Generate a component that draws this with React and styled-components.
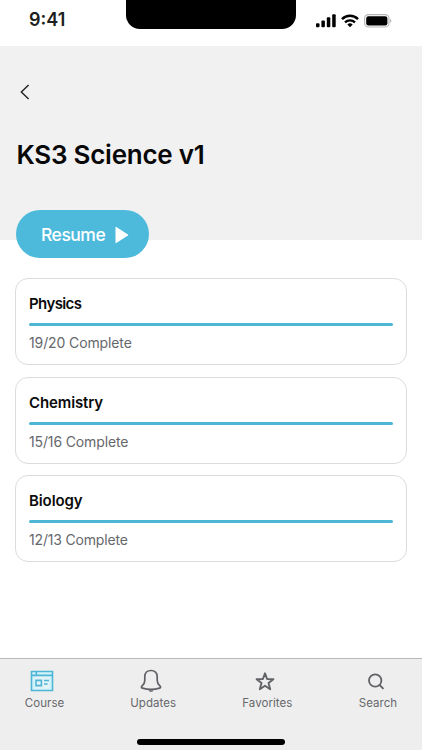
import React from "react"
import styled, { createGlobalStyle } from "styled-components"

const units = [
  { name: "Physics", done: 19, total: 20, heading: -0.6, track: -0.12 },
  { name: "Chemistry", done: 15, total: 16, heading: -0.12, track: -0.14 },
  { name: "Biology", done: 12, total: 13, heading: -0.1, track: -0.18 },
]

const CourseIcon = () => (
  <svg width="24" height="24" viewBox="0 0 24 24" fill="none" stroke="currentColor">
    <path d="M1.500 2.500h21v19h-21z" fill="#d3f3fb" strokeWidth="1.600" />
    <path d="M5 7.500h14v12H5z" fill="#e4f3f7" stroke="none" />
    <path d="M1.500 6.400h21M6.300 2.500v3.900" strokeWidth="1.600" />
    <path d="M6 11.400h5.400v5.200H6z" strokeWidth="1.600" />
    <path d="M14 11.600h5M14 15.100h3.600" strokeWidth="1.500" />
  </svg>
)

const BellIcon = () => (
  <svg width="24" height="24" viewBox="0 0 24 24" fill="none" stroke="currentColor">
    <path
      d="M12 1.500c-3.800 0-6.200 2.500-6.200 6.100v4c0 2.500-.8 3.600-2.700 5.300-1 1-.8 1.900.4 2.200 5 1.500 12 1.500 17 0 1.200-.3 1.400-1.200.4-2.200-1.900-1.700-2.700-2.800-2.700-5.300v-4c0-3.600-2.400-6.100-6.200-6.100z"
      strokeWidth="1.700"
      strokeLinejoin="round"
    />
    <path d="M9.500 21.300h5c-.5 1-1.300 1.500-2.500 1.500s-2-.5-2.500-1.500z" fill="currentColor" stroke="none" />
  </svg>
)

const StarIcon = () => (
  <svg width="24" height="24" viewBox="0 0 24 24" fill="none" stroke="currentColor">
    <path
      d="M12 4.300l2.100 5.700 6.300.2-4.900 3.900 1.700 6.200-5.200-3.500-5.200 3.500 1.700-6.200-4.900-3.900 6.300-.2z"
      strokeWidth="1.900"
      strokeLinejoin="round"
    />
  </svg>
)

const SearchIcon = () => (
  <svg width="24" height="24" viewBox="0 0 24 24" fill="none" stroke="currentColor" strokeWidth="1.800">
    <circle cx="11.200" cy="11.500" r="6.200" />
    <path d="M15.600 16l3.400 3.400" strokeLinecap="round" />
  </svg>
)

const tabs = [
  { label: "Course", icon: <CourseIcon />, active: true, width: 39, shift: 5 },
  { label: "Updates", icon: <BellIcon />, width: 45, shift: 5 },
  { label: "Favorites", icon: <StarIcon />, width: 50, shift: 4 },
  { label: "Search", icon: <SearchIcon />, width: 38, shift: 3 },
]

const App = () => {
  return (
    <Screen>
      <GlobalStyle />
      <StatusBar>
        <Time>9:41</Time>
        <Notch />
        <StatusIcons>
          <svg width="20" height="14" viewBox="0 0 20 14">
            <rect x="0" y="9.200" width="3.500" height="4" rx="1" />
            <rect x="5.400" y="6.500" width="3.500" height="6.700" rx="1" />
            <rect x="10.800" y="3.300" width="3.500" height="9.900" rx="1" />
            <rect x="16.200" y="0.300" width="3.500" height="12.900" rx="1" />
          </svg>
          <svg width="18" height="14" viewBox="0 0 18 14" fill="none" stroke="#000">
            <path d="M1 5.100a11.500 11.500 0 0 1 16 0" strokeWidth="2.500" />
            <path d="M4 8.300a7.200 7.200 0 0 1 10 0" strokeWidth="2.300" />
            <path d="M9 13.200l-2.700-2.700a3.900 3.900 0 0 1 5.400 0z" fill="#000" stroke="none" />
          </svg>
          <svg width="28" height="14" viewBox="0 0 28 14">
            <rect x="0.600" y="0.600" width="24.400" height="12.400" rx="3.800" fill="none" stroke="#b4b4b4" strokeWidth="1.100" />
            <rect x="2.200" y="2.200" width="21.200" height="9.200" rx="2.200" />
            <path d="M26.200 4.800c1.500.7 1.500 3.300 0 4z" fill="#aaa" />
          </svg>
        </StatusIcons>
      </StatusBar>
      <Hero>
        <BackButton aria-label="Back">
          <svg width="10" height="16" viewBox="0 0 10 16" fill="none" stroke="#222" strokeWidth="1.400">
            <path d="M8.600 0.900L1.300 8l7.300 7.100" />
          </svg>
        </BackButton>
        <Title>KS3 Science v1</Title>
      </Hero>
      <ResumeButton>
        <span>Resume</span>
        <svg width="14" height="18" viewBox="0 0 14 18" fill="#fff">
          <path d="M0.500 1.400v15.200c0 .5.400.7.800.4l11.700-7.500c.4-.3.400-.7 0-1l-11.700-7.500c-.4-.3-.8-.1-.8.400z" />
        </svg>
      </ResumeButton>
      <UnitList>
        {units.map(({ name, done, total, heading, track }) => (
          <Card key={name}>
            <UnitName $track={heading}>{name}</UnitName>
            <Progress />
            <Count $track={track}>
              {done}/{total} Complete
            </Count>
          </Card>
        ))}
      </UnitList>
      <TabBar>
        <TabList>
          {tabs.map(({ label, icon, active, width, shift }) => (
            <Tab key={label} $active={active} $width={width} $shift={shift}>
              {icon}
              <span>{label}</span>
            </Tab>
          ))}
        </TabList>
        <HomeIndicator />
      </TabBar>
    </Screen>
  )
}

const GlobalStyle = createGlobalStyle`
  * {
    box-sizing: border-box;
  }
  body {
    margin: 0;
    background: #fff;
    font-family: Inter, "Liberation Sans", sans-serif;
  }
  h1, h2, p {
    margin: 0;
  }
  svg {
    display: block;
    flex-shrink: 0;
  }
  button {
    border: none;
    padding: 0;
    background: transparent;
    font-family: inherit;
    cursor: pointer;
  }
`

const Screen = styled.main`
  display: flex;
  flex-direction: column;
  width: 422px;
  height: 750px;
  overflow: hidden;
  background: #fff;
`

const StatusBar = styled.header`
  display: grid;
  grid-template-columns: 126px 170px 126px;
  height: 46px;
  flex-shrink: 0;
`

const Time = styled.span`
  padding: 8px 0 0 29px;
  font-size: 18px;
  line-height: 24px;
  font-weight: 600;
  color: #1d1e20;
`

const Notch = styled.div`
  height: 29px;
  background: #000;
  border-radius: 0 0 14px 14px;
`

const StatusIcons = styled.div`
  display: flex;
  gap: 5px;
  padding: 14px 0 0 20px;
`

const Hero = styled.section`
  height: 194px;
  flex-shrink: 0;
  padding: 38px 16px 0;
  background: #f1f1f1;
`

const BackButton = styled.button`
  display: block;
  margin-left: 4px;
`

const Title = styled.h1`
  margin: 39px 0 0 0.500px;
  font-size: 26px;
  line-height: 32px;
  font-weight: 600;
  letter-spacing: -0.250px;
  color: #080808;
  white-space: nowrap;
`

const ResumeButton = styled.button`
  display: flex;
  align-items: center;
  gap: 10px;
  width: 133px;
  height: 48px;
  flex-shrink: 0;
  margin: -30px 0 0 16px;
  padding: 1px 0 0 25px;
  border-radius: 24px;
  background: #4dbadc;
  color: #fff;
  font-size: 17.500px;
  font-weight: 500;
  letter-spacing: -0.500px;
  span {
    width: 64px;
    text-align: left;
    white-space: nowrap;
  }
`

const UnitList = styled.section`
  display: flex;
  flex-direction: column;
  gap: 11.600px;
  padding: 20px 15px 0;
`

const Card = styled.article`
  height: 87px;
  padding: 15px 13px 0;
  border: 1px solid #dcdcdc;
  border-radius: 13px;
`

const UnitName = styled.h2`
  font-size: 15px;
  line-height: 20px;
  font-weight: 600;
  letter-spacing: ${({ $track }) => $track}px;
  color: #0b0b0b;
`

const Progress = styled.div`
  height: 3px;
  margin: 9px 0 7px;
  border-radius: 2px;
  background: #4db6d5;
`

const Count = styled.p`
  font-size: 14px;
  line-height: 20px;
  letter-spacing: ${({ $track }) => $track}px;
  color: #66686c;
`

const TabBar = styled.footer`
  display: flex;
  flex-direction: column;
  align-items: center;
  height: 92px;
  margin-top: auto;
  border-top: 1px solid #b9b9b9;
  background: #eee;
`

const TabList = styled.nav`
  display: flex;
  justify-content: space-between;
  width: 100%;
  padding: 10px 25px 0;
`

const Tab = styled.button`
  display: flex;
  flex-direction: column;
  align-items: center;
  width: ${({ $width }) => $width}px;
  color: #66686c;
  font-size: 11.500px;
  line-height: 16px;
  letter-spacing: 0.050px;
  svg {
    margin-right: ${({ $shift }) => $shift}px;
    color: ${({ $active }) => ($active ? "#4db6d5" : "#606266")};
  }
  span {
    margin-top: 2px;
    white-space: nowrap;
  }
`

const HomeIndicator = styled.div`
  width: 148px;
  height: 6px;
  margin-top: 28px;
  border-radius: 3px;
  background: #000;
`

export default App
